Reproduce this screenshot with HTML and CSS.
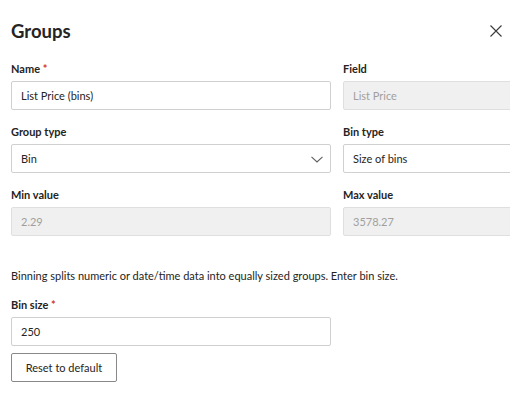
FILE: index.html
```html
<!DOCTYPE html>
<html>
<head>
<meta charset="utf-8">
<link rel="stylesheet" href="styles.css">
</head>
<body>
<div class="dialog">
  <div class="header">
    <h1 class="title">Groups</h1>
    <button class="close" aria-label="Close">
      <svg width="12" height="12" viewBox="0 0 12 12"><path d="M0.5 0.5L11.5 11.5M11.5 0.5L0.5 11.5" stroke="#3b3a39" stroke-width="1.1" fill="none"/></svg>
    </button>
  </div>
  <div class="grid">
    <div class="field">
      <div class="label">Name <span class="req">*</span></div>
      <div class="input">List Price (bins)</div>
    </div>
    <div class="field">
      <div class="label">Field</div>
      <div class="input disabled wide">List Price</div>
    </div>
    <div class="field">
      <div class="label">Group type</div>
      <div class="input select">Bin
        <svg class="chev" width="12" height="7" viewBox="0 0 12 7"><path d="M0.5 0.8L6 6L11.5 0.8" stroke="#605e5c" stroke-width="1.1" fill="none"/></svg>
      </div>
    </div>
    <div class="field">
      <div class="label">Bin type</div>
      <div class="input wide">Size of bins</div>
    </div>
    <div class="field">
      <div class="label">Min value</div>
      <div class="input disabled">2.29</div>
    </div>
    <div class="field">
      <div class="label">Max value</div>
      <div class="input disabled wide">3578.27</div>
    </div>
  </div>
  <p class="desc">Binning splits numeric or date/time data into equally sized groups. Enter bin size.</p>
  <div class="field single">
    <div class="label">Bin size <span class="req">*</span></div>
    <div class="input">250</div>
  </div>
  <button class="reset">Reset to default</button>
</div>
</body>
</html>
```
FILE: styles.css
```css
* { box-sizing: border-box; }
html, body { margin: 0; padding: 0; background: #fff; }
body {
  font-family: Lato, "Open Sans", sans-serif;
  font-size: 11px;
  color: #252423;
  width: 528px;
  height: 394px;
  overflow: hidden;
}
.dialog {
  width: 510px;
  overflow: hidden;
  padding: 0 0 0 11px;
}
.header {
  display: flex;
  justify-content: space-between;
  align-items: center;
  height: 61px;
  padding-top: 1px;
}
.title {
  margin: 0;
  font-size: 18.5px;
  font-weight: 700;
  line-height: 24px;
}
.close {
  border: 0;
  background: none;
  padding: 0;
  width: 12px;
  height: 12px;
  margin-right: 8px;
  display: flex;
}
.grid {
  display: grid;
  grid-template-columns: 320px 200px;
  column-gap: 12px;
  row-gap: 14px;
}
.field { display: flex; flex-direction: column; }
.label {
  font-weight: 700;
  line-height: 16px;
  height: 16px;
  margin-bottom: 4px;
}
.req { color: #d13438; }
.input {
  height: 29px;
  border: 1px solid #d2d0ce;
  border-radius: 2px;
  padding: 0 9px;
  display: flex;
  align-items: center;
  line-height: 16px;
  background: #fff;
}
.input.disabled {
  background: #f0f0f0;
  border-color: #e1dfdd;
  color: #a19f9d;
}
.select { justify-content: space-between; padding-right: 7px; }
.chev { margin-top: 1px; }
.desc {
  margin: 32px 0 13px;
  line-height: 16px;
}
.single { width: 320px; }
.reset {
  margin-top: 7px;
  height: 29px;
  width: 106px;
  border: 1px solid #8a8886;
  border-radius: 2px;
  background: #fff;
  font-family: inherit;
  font-size: 11px;
  color: #252423;
  padding: 0;
}
```
